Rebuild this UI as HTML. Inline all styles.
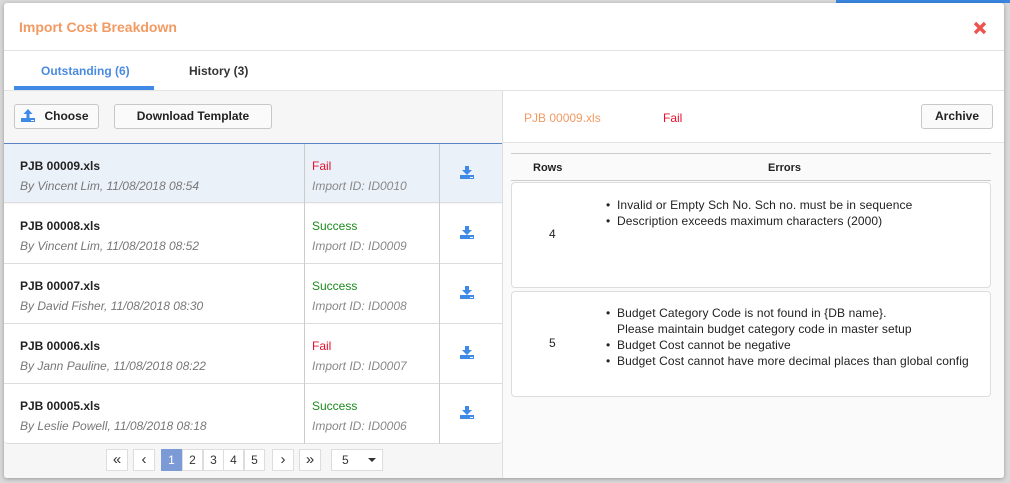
<!DOCTYPE html>
<html><head><style>
*{box-sizing:border-box;margin:0;padding:0}
body{width:1010px;height:483px;background:#d9d9d9;font-family:"Liberation Sans",sans-serif;font-size:12px;color:#222;position:relative;overflow:hidden}
.abs{position:absolute}
.modal{position:absolute;left:4px;top:3px;width:1000px;height:475px;background:#fff;border-radius:3px;box-shadow:0 1px 4px rgba(0,0,0,.3);overflow:hidden}
.btn{position:absolute;border:1px solid #c8c8c8;border-radius:3px;background:#fafafa;font-weight:bold;font-size:12px;color:#222;text-align:center}
.row{position:absolute;left:0;width:498px;height:60px;border-bottom:1px solid #ddd;background:#fff}
.row .n{position:absolute;left:16px;top:15px;font-weight:bold;font-size:12px}
.row .b{position:absolute;left:16px;top:35px;font-style:italic;color:#777;font-size:12px}
.row .s{position:absolute;left:308px;top:15px;font-size:12px}
.row .i{position:absolute;left:308px;top:35px;font-style:italic;color:#888;font-size:12px}
.row .v1{position:absolute;left:300px;top:0;height:60px;border-left:1px solid #ccc}
.row .v2{position:absolute;left:435px;top:0;height:60px;border-left:1px solid #ccc}
.row svg{position:absolute;left:455px;top:22px}
.pg{position:absolute;top:446px;height:22px;border:1px solid #ddd;background:#fff;text-align:center;line-height:20px;font-size:12px;color:#333}
.box{position:absolute;left:8px;width:480px;background:#fff;border:1px solid #ddd;border-radius:4px}
.box ul{position:absolute;left:105px;list-style:none;font-size:12px;line-height:16px;letter-spacing:0.1px}
.box li:before{content:"•";position:absolute;left:-11px}
.box li{position:relative}
</style></head><body>
<div class="abs" style="left:836px;top:0;width:174px;height:3px;background:#3a86e0"></div>
<div class="modal">
 <div class="abs" style="left:15px;top:16px;color:#f39a62;font-weight:bold;font-size:14px">Import Cost Breakdown</div>
 <svg class="abs" style="left:969px;top:18px" width="14" height="14" viewBox="0 0 14 14"><path d="M2 2L12 12M12 2L2 12" stroke="#ef5350" stroke-width="3.4"/></svg>
 <div class="abs" style="left:0;top:47px;width:1000px;border-top:1px solid #e3e3e3"></div>
 <div class="abs" style="left:37px;top:61px;color:#4a8be0;font-weight:bold;font-size:12px">Outstanding (6)</div>
 <div class="abs" style="left:185px;top:61px;color:#333;font-weight:bold;font-size:12px">History (3)</div>
 <div class="abs" style="left:10px;top:83px;width:140px;height:4px;background:#3e8ae6"></div>
 <div class="abs" style="left:0;top:87px;width:1000px;border-top:1px solid #e3e3e3"></div>
 <div class="abs" style="left:0;top:88px;width:498px;height:387px;background:#f6f6f6">
  <div class="btn" style="left:10px;top:13px;width:85px;height:25px;line-height:23px;padding-left:20px">Choose</div>
  <svg class="abs" style="left:17px;top:18px" width="14" height="13" viewBox="0 0 14 13"><path d="M7 0L11.5 5H8.5V9H5.5V5H2.5Z" fill="#3e8ae6"/><rect x="0" y="9" width="14" height="4" fill="#3e8ae6"/><rect x="10" y="11" width="3" height="1" fill="#fff"/></svg>
  <div class="btn" style="left:110px;top:13px;width:158px;height:25px;line-height:23px">Download Template</div>
  <div class="row" style="top:52px;background:#ebf1f9;border-top:1px solid #5b82c5"><div class="n">PJB 00009.xls</div><div class="b">By Vincent Lim, 11/08/2018 08:54</div><div class="v1"></div><div class="s" style="color:#e8112d">Fail</div><div class="i">Import ID: ID0010</div><div class="v2"></div><svg width="16" height="13" viewBox="0 0 16 13"><path d="M6 0H10V4H13L8 9L3 4H6Z" fill="#3e8ae6"/><rect x="1" y="9" width="14" height="4" fill="#3e8ae6"/><rect x="11" y="11" width="3" height="1" fill="#fff"/></svg></div>
  <div class="row" style="top:113px"><div class="n">PJB 00008.xls</div><div class="b">By Vincent Lim, 11/08/2018 08:52</div><div class="v1"></div><div class="s" style="color:#1a8a1a">Success</div><div class="i">Import ID: ID0009</div><div class="v2"></div><svg width="16" height="13" viewBox="0 0 16 13"><path d="M6 0H10V4H13L8 9L3 4H6Z" fill="#3e8ae6"/><rect x="1" y="9" width="14" height="4" fill="#3e8ae6"/><rect x="11" y="11" width="3" height="1" fill="#fff"/></svg></div>
  <div class="row" style="top:173px"><div class="n">PJB 00007.xls</div><div class="b">By David Fisher, 11/08/2018 08:30</div><div class="v1"></div><div class="s" style="color:#1a8a1a">Success</div><div class="i">Import ID: ID0008</div><div class="v2"></div><svg width="16" height="13" viewBox="0 0 16 13"><path d="M6 0H10V4H13L8 9L3 4H6Z" fill="#3e8ae6"/><rect x="1" y="9" width="14" height="4" fill="#3e8ae6"/><rect x="11" y="11" width="3" height="1" fill="#fff"/></svg></div>
  <div class="row" style="top:233px"><div class="n">PJB 00006.xls</div><div class="b">By Jann Pauline, 11/08/2018 08:22</div><div class="v1"></div><div class="s" style="color:#e8112d">Fail</div><div class="i">Import ID: ID0007</div><div class="v2"></div><svg width="16" height="13" viewBox="0 0 16 13"><path d="M6 0H10V4H13L8 9L3 4H6Z" fill="#3e8ae6"/><rect x="1" y="9" width="14" height="4" fill="#3e8ae6"/><rect x="11" y="11" width="3" height="1" fill="#fff"/></svg></div>
  <div class="row" style="top:293px;border-radius:0 0 4px 4px"><div class="n">PJB 00005.xls</div><div class="b">By Leslie Powell, 11/08/2018 08:18</div><div class="v1"></div><div class="s" style="color:#1a8a1a">Success</div><div class="i">Import ID: ID0006</div><div class="v2"></div><svg width="16" height="13" viewBox="0 0 16 13"><path d="M6 0H10V4H13L8 9L3 4H6Z" fill="#3e8ae6"/><rect x="1" y="9" width="14" height="4" fill="#3e8ae6"/><rect x="11" y="11" width="3" height="1" fill="#fff"/></svg></div>
 </div>
 <div class="pg" style="left:102px;width:22px;font-size:15px">«</div>
 <div class="pg" style="left:129px;width:22px;font-size:15px">‹</div>
 <div class="pg" style="left:157px;width:21px;background:#7b9ad6;color:#fff;border-color:#7b9ad6">1</div>
 <div class="pg" style="left:178px;width:21px">2</div>
 <div class="pg" style="left:199px;width:21px">3</div>
 <div class="pg" style="left:219px;width:21px">4</div>
 <div class="pg" style="left:240px;width:21px">5</div>
 <div class="pg" style="left:268px;width:22px;font-size:15px">›</div>
 <div class="pg" style="left:295px;width:22px;font-size:15px">»</div>
 <div class="pg" style="left:327px;width:52px;text-align:left;padding-left:10px">5<span style="position:absolute;left:36px;top:8px;border:4px solid transparent;border-top:4px solid #333"></span></div>
 <div class="abs" style="left:498px;top:88px;width:1px;height:387px;background:#ddd"></div>
 <div class="abs" style="left:499px;top:88px;width:501px;height:387px;background:#fafafa">
  <div class="abs" style="left:0;top:0;width:501px;height:52px;background:#fff;border-bottom:1px solid #e3e3e3"></div>
  <div class="abs" style="left:21px;top:20px;color:#f39a62;font-size:12px">PJB 00009.xls</div>
  <div class="abs" style="left:160px;top:20px;color:#e8112d;font-size:12px">Fail</div>
  <div class="btn" style="left:418px;top:13px;width:72px;height:25px;line-height:23px">Archive</div>
  <div class="abs" style="left:8px;top:62px;width:480px;border-top:1px solid #ccc"></div>
  <div class="abs" style="left:30px;top:71px;font-weight:bold;font-size:11px">Rows</div>
  <div class="abs" style="left:265px;top:71px;font-weight:bold;font-size:11px">Errors</div>
  <div class="abs" style="left:8px;top:89px;width:480px;border-top:1px solid #ccc"></div>
  <div class="box" style="top:91px;height:106px"><div class="abs" style="left:37px;top:44px">4</div><ul style="top:14px"><li>Invalid or Empty Sch No. Sch no. must be in sequence</li><li>Description exceeds maximum characters (2000)</li></ul></div>
  <div class="box" style="top:200px;height:106px"><div class="abs" style="left:37px;top:44px">5</div><ul style="top:13px"><li>Budget Category Code is not found in {DB name}.<br>Please maintain budget category code in master setup</li><li>Budget Cost cannot be negative</li><li>Budget Cost cannot have more decimal places than global config</li></ul></div>
 </div>
</div>
</body></html>
